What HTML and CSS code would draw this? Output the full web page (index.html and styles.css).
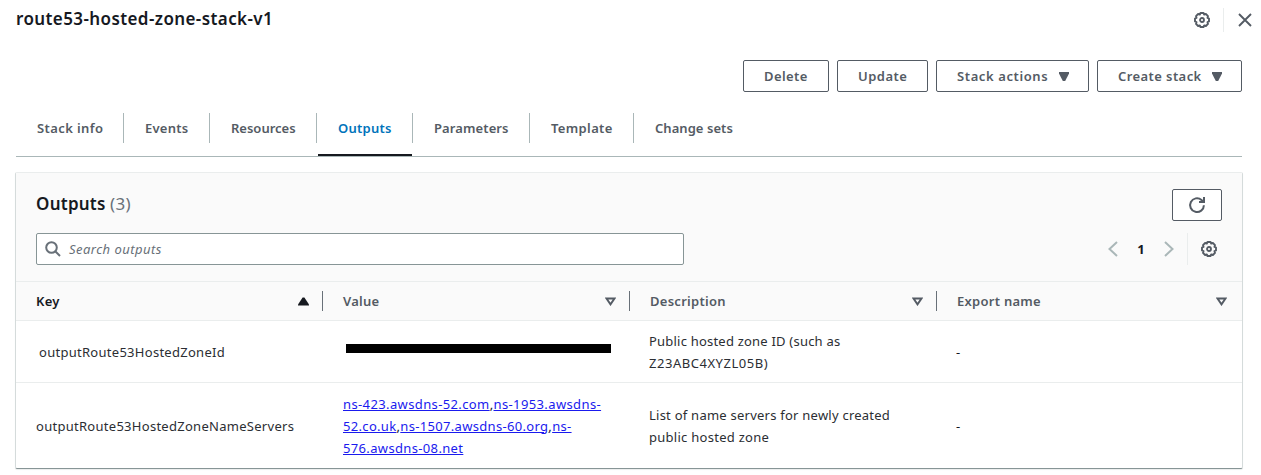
FILE: index.html
```html
<!DOCTYPE html>
<html lang="en">
<head>
<meta charset="utf-8">
<title>route53-hosted-zone-stack-v1</title>
<link rel="stylesheet" href="styles.css">
</head>
<body>
<svg width="0" height="0" class="defs">
  <symbol id="gear" viewBox="0 0 16 16">
    <path d="M6.500 1h3l.7 1.500 1.700-.5 2.100 2.100-.5 1.700 1.500.7v3l-1.500.7.5 1.700-2.100 2.100-1.700-.5-.7 1.500h-3l-.7-1.500-1.700.5L2 11.900l.5-1.700L1 9.500v-3l1.500-.7L2 4.100 4.100 2l1.700.5z" fill="none" stroke="currentColor" stroke-width="1.900" stroke-linejoin="round"/>
    <circle cx="8" cy="8" r="2" fill="none" stroke="currentColor" stroke-width="1.800"/>
  </symbol>
</svg>
<div class="page">
  <header class="topbar">
    <h1 class="title">route53-hosted-zone-stack-v1</h1>
    <svg class="gear"><use href="#gear"/></svg>
    <span class="top-divider"></span>
    <svg class="close" viewBox="0 0 14 14"><path d="M1 1l12 12M13 1L1 13" fill="none" stroke="currentColor" stroke-width="1.900"/></svg>
  </header>
  <div class="actions">
    <button class="btn delete"><span>Delete</span></button>
    <button class="btn update"><span>Update</span></button>
    <button class="btn stack-actions"><span>Stack actions</span><svg class="caret" viewBox="0 0 10 9"><path d="M0 0h10v1.500L6.200 9H3.800L0 1.500z" fill="currentColor"/></svg></button>
    <button class="btn create"><span>Create stack</span><svg class="caret" viewBox="0 0 10 9"><path d="M0 0h10v1.500L6.200 9H3.800L0 1.500z" fill="currentColor"/></svg></button>
  </div>
  <nav class="tabs">
    <a class="tab t-info"><span>Stack info</span></a>
    <a class="tab t-events"><span>Events</span></a>
    <a class="tab t-resources"><span>Resources</span></a>
    <a class="tab t-outputs active"><span>Outputs</span></a>
    <a class="tab t-params"><span>Parameters</span></a>
    <a class="tab t-template"><span>Template</span></a>
    <a class="tab t-changes"><span>Change sets</span></a>
  </nav>
  <section class="panel">
    <div class="panel-head">
      <div class="head-row">
        <h2 class="heading"><span class="heading-name">Outputs</span> <span class="count">(3)</span></h2>
        <button class="btn refresh"><svg viewBox="0 0 18 18"><path d="M15.900 9.200A6.900 6.900 0 1 1 13.500 3.900L15.300 5.700M11 6.100H16V1.100" fill="none" stroke="currentColor" stroke-width="2"/></svg></button>
      </div>
      <div class="tools">
        <div class="search">
          <svg viewBox="0 0 16 16"><circle cx="6.500" cy="6.500" r="5.300" fill="none" stroke="currentColor" stroke-width="2"/><path d="M10.200 10.200l4.800 4.800" stroke="currentColor" stroke-width="2"/></svg>
          <span class="placeholder">Search outputs</span>
        </div>
        <div class="pager">
          <svg class="chev" viewBox="0 0 10 16"><path d="M9 1L1.500 8L9 15" fill="none" stroke="currentColor" stroke-width="2"/></svg>
          <span class="page-no">1</span>
          <svg class="chev" viewBox="0 0 10 16"><path d="M1 1l7.500 7L1 15" fill="none" stroke="currentColor" stroke-width="2"/></svg>
          <span class="pager-divider"></span>
          <svg class="gear"><use href="#gear"/></svg>
        </div>
      </div>
    </div>
    <div class="row head">
      <div class="th sorted"><span class="h-key">Key</span><svg class="sort" viewBox="0 0 11 9"><path d="M0 8.500V7.500L4.600.500h1.800L11 7.500v1z" fill="currentColor"/></svg></div>
      <div class="th"><span class="h-value">Value</span><svg class="sort" viewBox="0 0 11 9"><path d="M1.500 1.500h8L5.500 7.400z" fill="none" stroke="currentColor" stroke-width="1.900"/></svg></div>
      <div class="th"><span class="h-desc">Description</span><svg class="sort" viewBox="0 0 11 9"><path d="M1.500 1.500h8L5.500 7.400z" fill="none" stroke="currentColor" stroke-width="1.900"/></svg></div>
      <div class="th"><span class="h-export">Export name</span><svg class="sort" viewBox="0 0 11 9"><path d="M1.500 1.500h8L5.500 7.400z" fill="none" stroke="currentColor" stroke-width="1.900"/></svg></div>
    </div>
    <div class="row first">
      <div class="td key-id"><span>outputRoute53HostedZoneId</span></div>
      <div class="td"><div class="redacted"></div></div>
      <div class="td desc"><span class="d1">Public hosted zone ID (such as</span><span class="d2">Z23ABC4XYZL05B)</span></div>
      <div class="td dash">-</div>
    </div>
    <div class="row second">
      <div class="td key-ns"><span>outputRoute53HostedZoneNameServers</span></div>
      <div class="td links">
        <span class="l1"><a href="#">ns-423.awsdns-52.com</a>,<a href="#">ns-1953.awsdns-</a></span>
        <span class="l2"><a href="#">52.co.uk</a>,<a href="#">ns-1507.awsdns-60.org</a>,<a href="#">ns-</a></span>
        <span class="l3"><a href="#">576.awsdns-08.net</a></span>
      </div>
      <div class="td desc"><span class="d3">List of name servers for newly created</span><span class="d4">public hosted zone</span></div>
      <div class="td dash">-</div>
    </div>
  </section>
</div>
</body>
</html>
```

FILE: styles.css
```css
* { box-sizing: border-box; }
body { margin: 0; background: #fff; color: #16191f; font: 13px/22px "Noto Sans", sans-serif; }
svg { display: block; flex: none; }
.defs { position: absolute; }
.page { width: 1261px; height: 475px; overflow: hidden; }
.topbar { display: flex; align-items: center; height: 40px; padding: 0 9px 0 16px; }
.title { margin: 0 auto 3px 0; font-size: 17px; font-weight: 600; line-height: 24px; letter-spacing: 0.4px; white-space: nowrap; }
.gear { width: 16px; height: 16px; color: #545b64; }
.top-divider { width: 1px; height: 24px; margin: 0 14px 0 13px; background: #eaeded; }
.close { width: 14px; height: 14px; color: #545b64; }
.actions { display: flex; justify-content: flex-end; gap: 8px; margin-top: 20px; padding-right: 19px; }
.btn { display: flex; align-items: center; height: 32px; padding: 0 20px; border: 1px solid #545b64; border-radius: 2px; background: #fff; color: #545b64; font: 600 13px/22px "Noto Sans", sans-serif; white-space: nowrap; }
.delete { width: 86px; letter-spacing: 0.4px; }
.update { width: 91px; padding-right: 0; letter-spacing: 0.5px; }
.stack-actions { width: 153px; justify-content: space-between; letter-spacing: 0.6px; }
.create { width: 145px; justify-content: space-between; letter-spacing: 0.42px; }
.caret { width: 10px; height: 9px; margin-right: -1px; }
.tabs { display: flex; margin: 20px 19px 0 16px; height: 45px; border-bottom: 1px solid #aab7b8; color: #545b64; font-weight: 600; white-space: nowrap; }
.tab { position: relative; height: 30px; padding: 5px 0 0 21px; border-right: 1px solid #aab7b8; }
.tab { margin-top: 1px; padding-top: 4px; }
.t-info { width: 108px; letter-spacing: 0.4px; }
.t-events { width: 86px; letter-spacing: 0.25px; }
.t-resources { width: 107px; }
.t-outputs { width: 96px; letter-spacing: 0.25px; }
.t-params { width: 117px; letter-spacing: 0.1px; }
.t-template { width: 104px; letter-spacing: 0.35px; }
.t-changes { border: 0; letter-spacing: 0.05px; }
.active { color: #0073bb; }
.active::after { content: ""; position: absolute; left: 1px; right: 0; bottom: -13px; height: 2px; background: #16191f; }
.panel { width: 1228px; height: 297px; margin: 15px 0 0 15px; border: 1px solid #d5dbdb; border-top-color: #eaeded; border-bottom-color: #879596; border-radius: 2px; box-shadow: 0 1px 1px #eaeded; }
.panel-head { height: 109px; padding: 16px 20px 0; background: #fafafa; border-bottom: 1px solid #eaeded; }
.head-row { display: flex; justify-content: space-between; height: 44px; }
.heading { margin: 0; font-size: 17px; font-weight: 600; line-height: 30px; white-space: nowrap; }
.heading-name { letter-spacing: 0.25px; }
.count { color: #687078; font-weight: 400; letter-spacing: 0.3px; }
.refresh { width: 50px; padding: 0 15px; }
.refresh svg { width: 18px; height: 18px; }
.tools { display: flex; justify-content: space-between; }
.search { display: flex; align-items: center; width: 648px; height: 32px; padding-left: 8px; gap: 8px; background: #fff; border: 1px solid #879596; border-radius: 2px; color: #687078; font-style: italic; }
.search svg { width: 16px; height: 16px; }
.placeholder { letter-spacing: 0.47px; }
.pager { display: flex; align-items: center; height: 32px; padding-right: 5px; color: #545b64; }
.chev { width: 10px; height: 16px; color: #aab7b8; }
.page-no { width: 46px; text-align: center; color: #16191f; font-weight: 700; }
.pager-divider { width: 1px; height: 32px; margin: 0 13px 0 13px; background: #eaeded; }
.row { display: grid; grid-template-columns: 307px 307px 307px 305px; }
.head { height: 39px; background: #fafafa; border-bottom: 1px solid #eaeded; color: #545b64; font-weight: 600; align-items: center; }
.th { display: flex; align-items: center; justify-content: space-between; height: 20px; padding: 0 13px 0 20px; border-right: 1px solid #687078; letter-spacing: 0.27px; white-space: nowrap; }
.th:last-child { border: 0; padding-right: 15px; }
.sorted { color: #16191f; }
.sort { width: 11px; height: 9px; }
.td { display: flex; flex-direction: column; justify-content: center; align-items: flex-start; padding-left: 19px; white-space: nowrap; }
.td > span { display: block; }
.desc, .key-id, .key-ns { color: #2b2e33; }
.first { height: 62px; border-bottom: 1px solid #eaeded; }
.second { height: 85px; }
.key-id { padding-left: 23px; letter-spacing: 0.28px; }
.key-ns { padding-left: 20px; letter-spacing: 0.28px; }
.redacted { width: 265px; height: 9px; margin: 0 0 7px 4px; background: #000; }
.links { padding-left: 20px; }
.links a { color: #1a1aee; text-decoration: underline; }
.l1 { letter-spacing: 0.38px; }
.l2 { letter-spacing: 0.32px; }
.l3 { letter-spacing: 0.35px; }
.d1 { letter-spacing: 0.21px; }
.d2 { letter-spacing: 0.53px; }
.d3 { letter-spacing: 0.24px; }
.d4 { letter-spacing: 0.27px; }
```
